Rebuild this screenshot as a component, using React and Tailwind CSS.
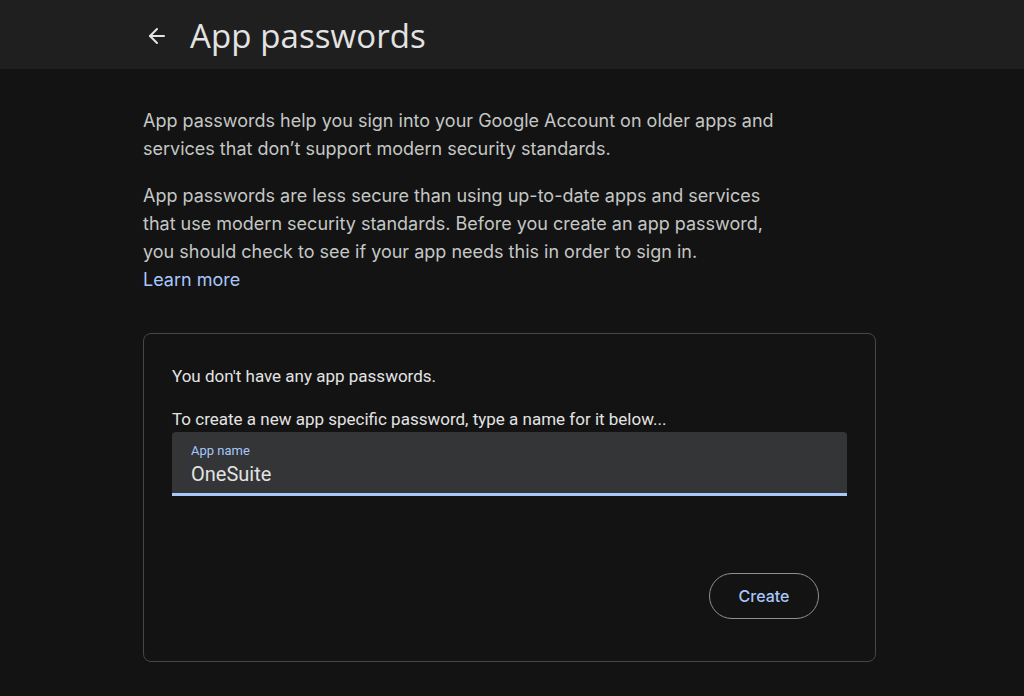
import { ArrowLeft } from 'lucide-react';

function Header() {
  return (
    <header className="h-[69px] bg-[#1f1f1f] flex items-center pl-[145px]">
      <ArrowLeft className="w-[24px] h-[24px] text-[#e3e3e3] mt-[3px]" strokeWidth={2} />
      <h1 className="ml-[21px] mt-[3px] text-[33px] text-[#e3e3e3] tracking-[0.1px]" style={{ fontFamily: '"Open Sans", sans-serif' }}>
        App passwords
      </h1>
    </header>
  );
}

function CreateCard() {
  return (
    <div className="mt-[39px] w-[733px] h-[329px] border border-[#444746] rounded-[8px] px-[28px] pt-[32px]">
      <p className="text-[17px] text-[#e3e3e3] leading-[20px]" style={{ fontFamily: 'Roboto, sans-serif' }}>
        You don't have any app passwords.
      </p>
      <p className="mt-[23px] text-[17px] text-[#e3e3e3] leading-[20px]" style={{ fontFamily: 'Roboto, sans-serif' }}>
        To create a new app specific password, type a name for it below...
      </p>
      {/* filled text field */}
      <div className="mt-[3px] h-[64px] bg-[#333537] rounded-t-[4px] border-b-[3px] border-[#a8c7fa] px-[19px] pt-[11px]">
        <div className="text-[13px] leading-[16px] text-[#a8c7fa]" style={{ fontFamily: 'Roboto, sans-serif' }}>App name</div>
        <div className="mt-[4px] text-[20px] leading-[22px] text-[#e3e3e3]" style={{ fontFamily: 'Roboto, sans-serif' }}>OneSuite</div>
      </div>
      <div className="flex justify-end pr-[28px] mt-[77px]">
        <button className="w-[110px] h-[46px] rounded-full border border-[#8e918f] text-[#a8c7fa] text-[16px] font-medium" style={{ fontFamily: 'Inter, sans-serif' }}>
          Create
        </button>
      </div>
    </div>
  );
}

export default function App() {
  return (
    <div className="w-[1024px] h-[696px] bg-[#131313] overflow-hidden">
      <Header />
      <main className="pl-[143px] pt-[38px]">
        <div className="text-[18px] leading-[28px] text-[#c4c7c5] w-[636px]" style={{ fontFamily: 'Inter, sans-serif' }}>
          <p>
            App passwords help you sign into your Google Account on older apps and services that don’t support modern security standards.
          </p>
          <p className="mt-[19px]">
            App passwords are less secure than using up-to-date apps and services that use modern security standards. Before you create an app password, you should check to see if your app needs this in order to sign in.
          </p>
          <a className="text-[#a8c7fa] block">Learn more</a>
        </div>
        <CreateCard />
      </main>
    </div>
  );
}
